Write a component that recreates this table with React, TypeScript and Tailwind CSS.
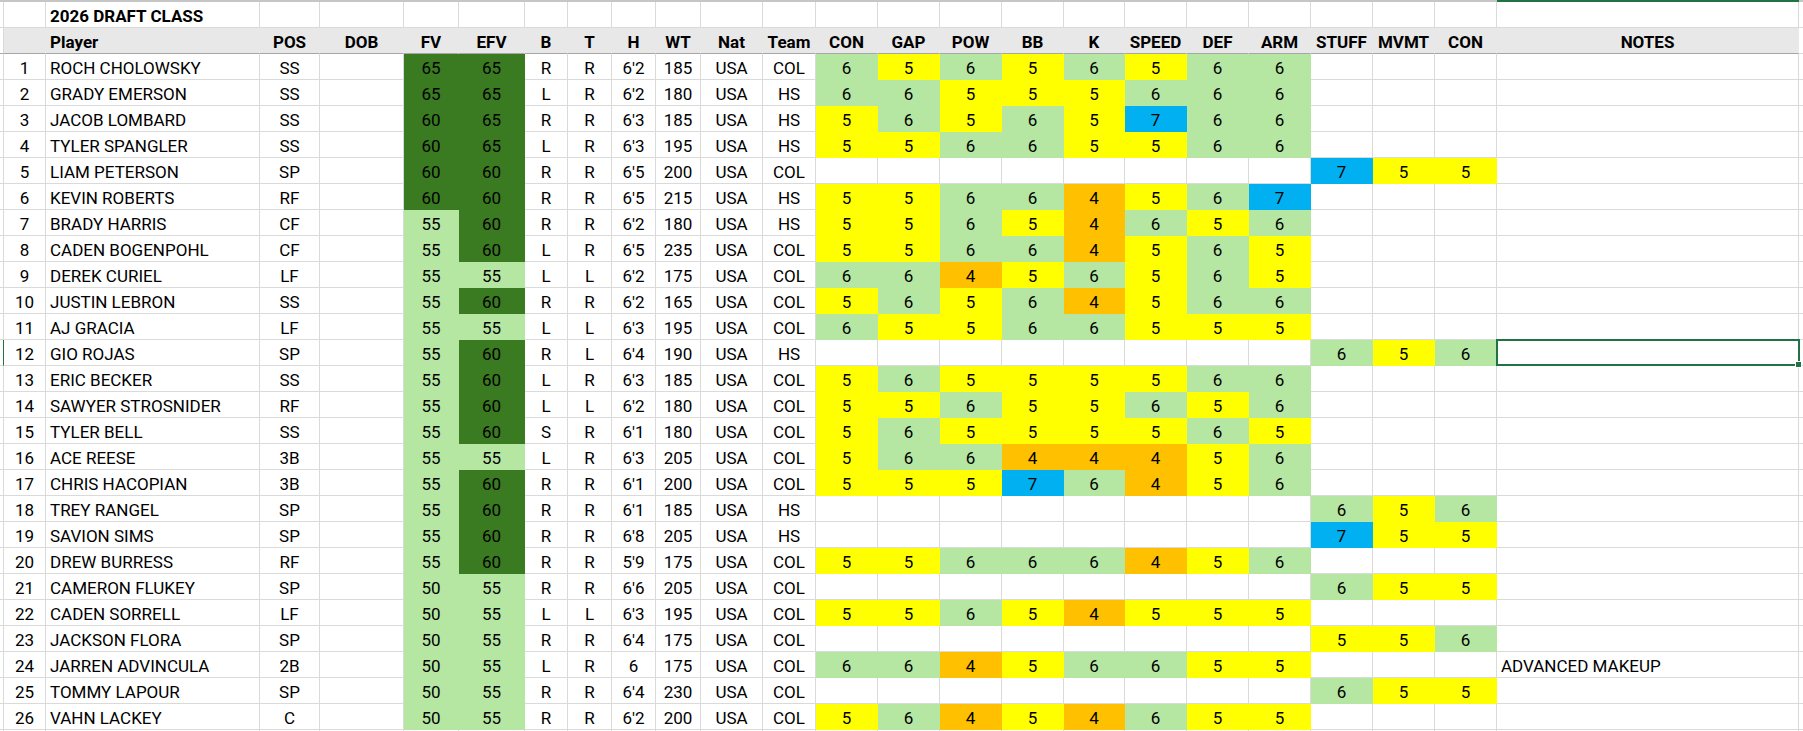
import React from "react";

type Row = [string, string, number, number, string, string, string, number, string, string, string, string?];

const DATA: Row[] = [
  ["ROCH CHOLOWSKY", "SS", 65, 65, "R", "R", "6'2", 185, "COL", "65656566", ""],
  ["GRADY EMERSON", "SS", 65, 65, "L", "R", "6'2", 180, "HS", "66555666", ""],
  ["JACOB LOMBARD", "SS", 60, 65, "R", "R", "6'3", 185, "HS", "56565766", ""],
  ["TYLER SPANGLER", "SS", 60, 65, "L", "R", "6'3", 195, "HS", "55665566", ""],
  ["LIAM PETERSON", "SP", 60, 60, "R", "R", "6'5", 200, "COL", "", "755"],
  ["KEVIN ROBERTS", "RF", 60, 60, "R", "R", "6'5", 215, "HS", "55664567", ""],
  ["BRADY HARRIS", "CF", 55, 60, "R", "R", "6'2", 180, "HS", "55654656", ""],
  ["CADEN BOGENPOHL", "CF", 55, 60, "L", "R", "6'5", 235, "COL", "55664565", ""],
  ["DEREK CURIEL", "LF", 55, 55, "L", "L", "6'2", 175, "COL", "66456565", ""],
  ["JUSTIN LEBRON", "SS", 55, 60, "R", "R", "6'2", 165, "COL", "56564566", ""],
  ["AJ GRACIA", "LF", 55, 55, "L", "L", "6'3", 195, "COL", "65566555", ""],
  ["GIO ROJAS", "SP", 55, 60, "R", "L", "6'4", 190, "HS", "", "656"],
  ["ERIC BECKER", "SS", 55, 60, "L", "R", "6'3", 185, "COL", "56555566", ""],
  ["SAWYER STROSNIDER", "RF", 55, 60, "L", "L", "6'2", 180, "COL", "55655656", ""],
  ["TYLER BELL", "SS", 55, 60, "S", "R", "6'1", 180, "COL", "56555565", ""],
  ["ACE REESE", "3B", 55, 55, "L", "R", "6'3", 205, "COL", "56644456", ""],
  ["CHRIS HACOPIAN", "3B", 55, 60, "R", "R", "6'1", 200, "COL", "55576456", ""],
  ["TREY RANGEL", "SP", 55, 60, "R", "R", "6'1", 185, "HS", "", "656"],
  ["SAVION SIMS", "SP", 55, 60, "R", "R", "6'8", 205, "HS", "", "755"],
  ["DREW BURRESS", "RF", 55, 60, "R", "R", "5'9", 175, "COL", "55666456", ""],
  ["CAMERON FLUKEY", "SP", 50, 55, "R", "R", "6'6", 205, "COL", "", "655"],
  ["CADEN SORRELL", "LF", 50, 55, "L", "L", "6'3", 195, "COL", "55654555", ""],
  ["JACKSON FLORA", "SP", 50, 55, "R", "R", "6'4", 175, "COL", "", "556"],
  ["JARREN ADVINCULA", "2B", 50, 55, "L", "R", "6", 175, "COL", "66456655", "", "ADVANCED MAKEUP"],
  ["TOMMY LAPOUR", "SP", 50, 55, "R", "R", "6'4", 230, "COL", "", "655"],
  ["VAHN LACKEY", "C", 50, 55, "R", "R", "6'2", 200, "COL", "56454655", ""],
];

const W = [
  "w-[42px]", // #
  "w-[214px]", // Player
  "w-[60px]", // POS
  "w-[84px]", // DOB
  "w-[55px]", // FV
  "w-[66px]", // EFV
  "w-[43px]", // B
  "w-[44px]", // T
  "w-[44px]", // H
  "w-[45px]", // WT
  "w-[62px]", // Nat
  "w-[53px]", // Team
  "w-[62px]", // CON
  "w-[62px]", // GAP
  "w-[62px]", // POW
  "w-[62px]", // BB
  "w-[61px]", // K
  "w-[62px]", // SPEED
  "w-[62px]", // DEF
  "w-[62px]", // ARM
  "w-[62px]", // STUFF
  "w-[62px]", // MVMT
  "w-[62px]", // CON
  "w-[302px]", // NOTES
];

const HEADERS = [
  "",
  "Player",
  "POS",
  "DOB",
  "FV",
  "EFV",
  "B",
  "T",
  "H",
  "WT",
  "Nat",
  "Team",
  "CON",
  "GAP",
  "POW",
  "BB",
  "K",
  "SPEED",
  "DEF",
  "ARM",
  "STUFF",
  "MVMT",
  "CON",
  "NOTES",
];

const RATING: Record<string, string> = {
  "4": "bg-[#ffc000] border-[#ffc000]",
  "5": "bg-[#ffff00] border-[#ffff00]",
  "6": "bg-[#b5e6a2] border-[#b5e6a2]",
  "7": "bg-[#00b0f0] border-[#00b0f0]",
};

const DARK = "bg-[#3a7a21] border-[#3a7a21]";
const LIGHT = "bg-[#b5e6a2] border-[#b5e6a2]";
const PLAIN = "bg-white border-[#dadada]";
const HEAD = "bg-[#e8e8e8] border-r-[#e8e8e8] border-b-[#a6a6a6]";

type CellProps = {
  w: string;
  fill?: string;
  left?: boolean;
  bold?: boolean;
  children?: React.ReactNode;
  extra?: React.ReactNode;
};

function Cell({ w, fill, left, bold, children, extra }: CellProps) {
  return (
    <div
      className={`${w} ${fill ?? PLAIN} ${left ? "justify-start pl-[4px]" : "justify-center"} ${
        bold ? "font-bold" : ""
      } relative shrink-0 h-[26px] border-r border-b flex items-end pb-[2px] leading-[18px] whitespace-nowrap`}
    >
      {children}
      {extra}
    </div>
  );
}

function Strip({ selected, head }: { selected?: boolean; head?: boolean }) {
  return (
    <div
      className={`w-[4px] shrink-0 h-[26px] border-r border-b bg-white ${
        head ? "border-[#a6a6a6] border-r-[#dadada]" : "border-[#dadada]"
      } ${selected ? "border-r-[#217346]" : ""}`}
    />
  );
}

function Tail() {
  return <div className="flex-1 h-[26px] border-b bg-white border-[#dadada]" />;
}

export default function App() {
  return (
    <div className="w-[1803px] h-[731px] overflow-hidden bg-white text-[17px] text-black font-['Roboto',Arial,sans-serif]">
      {/* top line */}
      <div className="flex h-[2px]">
        <div className="w-[1497px] shrink-0 bg-[#c6c6c6]" />
        <div className="w-[302px] shrink-0 bg-[#217346]" />
        <div className="flex-1 bg-[#c6c6c6]" />
      </div>

      {/* title row */}
      <div className="flex">
        <Strip />
        {W.map((w, i) => (
          <Cell key={i} w={w} left={i === 1} bold={i === 1}>
            {i === 1 ? "2026 DRAFT CLASS" : ""}
          </Cell>
        ))}
        <Tail />
      </div>

      {/* header row */}
      <div className="flex">
        <Strip head />
        {W.map((w, i) => (
          <Cell key={i} w={w} fill={HEAD} left={i === 1} bold>
            {HEADERS[i]}
          </Cell>
        ))}
        <Tail />
      </div>

      {DATA.map((r, idx) => {
        const [name, pos, fv, efv, b, t, h, wt, team, bat, pitch, notes] = r;
        const selected = idx === 11;
        const batDigits = bat ? bat.split("") : ["", "", "", "", "", "", "", ""];
        const pitchDigits = pitch ? pitch.split("") : ["", "", ""];
        return (
          <div className="flex" key={idx}>
            <Strip selected={selected} />
            <Cell w={W[0]}>{idx + 1}</Cell>
            <Cell w={W[1]} left>
              {name}
            </Cell>
            <Cell w={W[2]}>{pos}</Cell>
            <Cell w={W[3]} />
            <Cell w={W[4]} fill={fv >= 60 ? DARK : LIGHT}>
              {fv}
            </Cell>
            <Cell w={W[5]} fill={efv >= 60 ? DARK : LIGHT}>
              {efv}
            </Cell>
            <Cell w={W[6]}>{b}</Cell>
            <Cell w={W[7]}>{t}</Cell>
            <Cell w={W[8]}>{h}</Cell>
            <Cell w={W[9]}>{wt}</Cell>
            <Cell w={W[10]}>USA</Cell>
            <Cell w={W[11]}>{team}</Cell>
            {batDigits.map((d, j) => (
              <Cell key={"b" + j} w={W[12 + j]} fill={d ? RATING[d] : undefined}>
                {d}
              </Cell>
            ))}
            {pitchDigits.map((d, j) => (
              <Cell key={"p" + j} w={W[20 + j]} fill={d ? RATING[d] : undefined}>
                {d}
              </Cell>
            ))}
            <Cell
              w={W[23]}
              left
              extra={
                selected ? (
                  <>
                    <div className="absolute -left-[1px] -top-[1px] -right-[2px] -bottom-[1px] border-2 border-[#217346] z-10" />
                    <div className="absolute left-[298px] top-[21px] w-[7px] h-[7px] bg-[#217346] border border-white z-20" />
                  </>
                ) : null
              }
            >
              {notes ?? ""}
            </Cell>
            <Tail />
          </div>
        );
      })}

      {/* partial next row */}
      <div className="flex">
        <Strip />
        {W.map((w, i) => (
          <Cell key={i} w={w} />
        ))}
        <Tail />
      </div>
    </div>
  );
}
